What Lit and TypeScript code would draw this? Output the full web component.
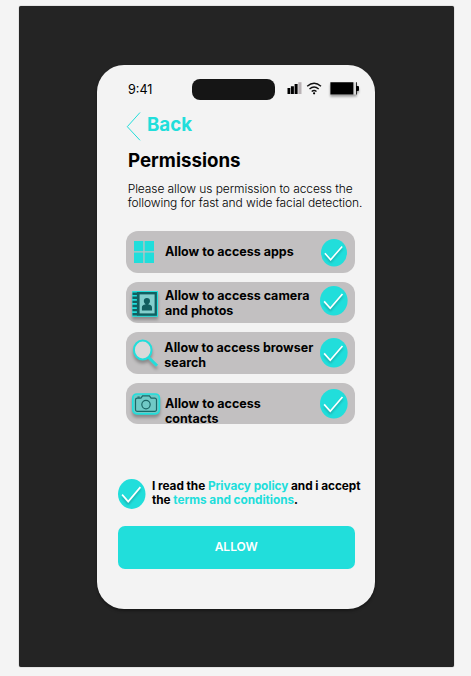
import { LitElement, html, css, svg } from "lit";
import { customElement, property } from "lit/decorators.js";

@customElement("check-mark")
class CheckMark extends LitElement {
  static styles = css`
    :host { display: block; flex: none; }
    svg { display: block; width: 100%; height: 100%; overflow: visible; }
    .tick { fill: none; stroke: #fff; stroke-width: 1.7; filter: drop-shadow(0 2px 1px rgba(0, 0, 0, 0.25)); }
  `;
  render() {
    return html`<svg viewBox="0 0 28 30" preserveAspectRatio="none">
      <ellipse cx="14" cy="15" rx="14" ry="15" fill="#21dedb" />
      <path class="tick" d="M4.2 15.6 L10.4 22.6 L22.8 8.1" />
    </svg>`;
  }
}

const icons: Record<string, unknown> = {
  apps: svg`<g fill="#21dedb"><path d="M8 10h9.3v10.2H8z M18.6 10H28v10.2h-9.4z M8 21.6h9.3V32H8z M18.6 21.6H28V32h-9.4z"/></g>`,
  book: svg`<g class="shadow">
      <rect x="6.2" y="9" width="25.8" height="25.8" fill="#21dedb"/>
      <rect x="10.9" y="10" width="20" height="23.8" fill="#125f60"/>
      <rect x="13.6" y="12.4" width="15" height="19" fill="#83cfcd"/>
      <path d="M6.5 11.7h5 M6.5 15.8h5 M6.5 19.9h5 M6.5 24h5 M6.5 28.1h5 M6.5 32.2h5" stroke="#125f60" stroke-width="2.4"/>
      <circle cx="20.9" cy="19.1" r="3.1" fill="#125f60"/>
      <path d="M19.4 20h3v2.6c2.5.3 3.6 1.3 3.6 3v2.9H15.9v-2.9c0-1.7 1.1-2.7 3.5-3z" fill="#125f60"/>
    </g>`,
  search: svg`<g class="shadow" fill="none" stroke="#21dedb">
      <ellipse cx="16.7" cy="18" rx="8.8" ry="9.5" fill="#d9d9d9" stroke-width="2"/>
      <path d="M22.2 25 L31 33.7" stroke-width="3"/>
    </g>`,
  camera: svg`<g class="shadow">
      <rect x="6.8" y="11" width="26.6" height="19.8" rx="4" fill="#70c9c6" stroke="#21dedb" stroke-width="1.7"/>
      <g fill="none" stroke="#1b6666" stroke-width="1.2">
        <path d="M11.3 15.1h3.6l1.7-2.3h6.8l1.7 2.3h3.6a1.8 1.8 0 0 1 1.8 1.8v9.7a1.8 1.8 0 0 1-1.8 1.8H11.3a1.8 1.8 0 0 1-1.8-1.8v-9.7a1.8 1.8 0 0 1 1.8-1.8z"/>
        <circle cx="20" cy="21.6" r="4.2"/><path d="M11.5 14.1h2.2"/>
      </g>
    </g>`,
};

@customElement("permission-row")
class PermissionRow extends LitElement {
  @property() icon = "";
  @property({ type: Array }) lines: string[] = [];
  static styles = css`
    :host { display: flex; box-sizing: border-box; width: 229px; background: #c2c0c1; border-radius: 12px; padding-right: 8px; }
    .icon { flex: none; width: 39px; height: 42px; overflow: visible; }
    .shadow { filter: drop-shadow(0 3px 1.5px rgba(0, 0, 0, 0.28)); }
    .label { flex: 1; font: 700 12.5px/15px Inter, sans-serif; color: #000; white-space: nowrap; padding-top: 6px; }
    check-mark { width: 27.6px; height: 29.6px; margin: 6px -0.4px 0 0; }
    :host([icon="apps"]) .label { padding-top: 13px; }
    :host([icon="apps"]) check-mark { width: 26px; height: 27.5px; margin: 7.6px 0.5px 0 0; }
    :host([icon="book"]) check-mark { margin-top: 4.5px; }
    :host([icon="search"]) .label { padding-top: 8px; margin-left: -0.7px; }
    :host([icon="camera"]) .label { padding-top: 13px; }
  `;
  render() {
    return html`<svg class="icon" viewBox="0 0 39 42">${icons[this.icon]}</svg>
      <div class="label">${this.lines.map((l) => html`<div>${l}</div>`)}</div>
      <check-mark></check-mark>`;
  }
}

@customElement("app-root")
class AppRoot extends LitElement {
  static styles = css`
    :host { display: block; box-sizing: border-box; width: 471px; height: 676px; padding: 6px 17px 9px 18.5px; background: #f4f4f4; font-family: Inter, sans-serif; color: #000; overflow: hidden; }
    .stage { box-sizing: border-box; height: 661px; padding: 59px 0 0 78.5px; background: #242424; border-radius: 2px; box-shadow: 0 0 1px #555; }
    .phone { box-sizing: border-box; width: 278px; height: 544px; background: #f3f3f3; border-radius: 27px; box-shadow: 0 2px 3px rgba(0, 0, 0, 0.35); padding-left: 29px; }
    .status { display: flex; height: 43px; padding-left: 2px; }
    .time { width: 63.5px; padding-top: 16px; font-size: 12.6px; line-height: 17px; }
    .island { width: 83.5px; height: 21.5px; margin-top: 13.5px; border-radius: 8px; background: #151515; }
    .signals { width: 90px; height: 43px; overflow: visible; }
    .battery { filter: drop-shadow(0 2px 1.2px rgba(0, 0, 0, 0.35)); }
    .back { display: flex; height: 34px; color: #21dedb; }
    .back svg { width: 21px; height: 34px; }
    .back span { font-size: 18.7px; font-weight: 700; line-height: 24px; padding-top: 5px; }
    h1 { margin: 7px 0 0 2px; font-size: 18.7px; font-weight: 700; line-height: 24px; }
    .intro { margin: 8.5px 0 0 1.7px; font-size: 12px; letter-spacing: -0.085px; line-height: 14px; font-weight: 300; color: #000; white-space: nowrap; }
    .rows { display: grid; grid-template-rows: 42px 41.5px 42px 41.5px; row-gap: 8.7px; margin-top: 21.5px; }
    .consent { display: flex; margin: 54.6px 0 0 -8px; }
    .consent check-mark { width: 27.5px; height: 30px; }
    .terms { font-size: 11.8px; letter-spacing: -0.045px; line-height: 14px; font-weight: 700; white-space: nowrap; padding: 0 0 0 6.5px; }
    .terms a { color: #21dedb; }
    .allow { display: block; width: 236.5px; height: 43px; margin: 17.4px 0 0 -8px; padding: 0 0 2px; border: 0; border-radius: 7px; background: #21dedb; color: #fff; font: 600 12px/41px Inter, sans-serif; }
  `;
  render() {
    return html`<div class="stage"><main class="phone">
      <div class="status">
        <div class="time">9:41</div>
        <div class="island"></div>
        <svg class="signals" viewBox="0 0 90 43">
          <path d="M12.5 23h2.8v6h-2.8z M15.9 21.2h3v7.8h-3z M19.6 19h3v10h-3z" fill="#000"/>
          <path d="M23.3 17.2h3.2V29h-3.2z" fill="#b9b2b5"/>
          <g fill="none" stroke="#111" stroke-width="1.4">
            <path d="M32.2 21.3q6.9-6 13.8 0 M34.5 24q4.6-4 9.2 0 M36.7 26.5q2.4-2 4.8 0"/>
          </g><circle cx="39.1" cy="28.3" r="1.1"/>
          <g class="battery"><rect x="55.4" y="17.5" width="26" height="12" fill="#d8d8d8"/><path d="M55.4 17.3h23v12.2h-23z M81 17.3h.8v12.2H81z M81.8 21h1.2q1 0 1 1v3q0 1-1 1h-1.2z"/></g>
        </svg>
      </div>
      <div class="back"><svg viewBox="0 0 21 34"><path d="M14 4.5 L1.3 18.7 L14 32.3" fill="none" stroke="#21dedb" stroke-width="1"/></svg><span>Back</span></div>
      <h1>Permissions</h1>
      <p class="intro">Please allow us permission to access the<br>following for fast and wide facial detection.</p>
      <div class="rows">
        <permission-row icon="apps" .lines=${["Allow to access apps"]}></permission-row>
        <permission-row icon="book" .lines=${["Allow to access camera", "and photos"]}></permission-row>
        <permission-row icon="search" .lines=${["Allow to access browser", "search"]}></permission-row>
        <permission-row icon="camera" .lines=${["Allow to access", "contacts"]}></permission-row>
      </div>
      <div class="consent"><check-mark></check-mark>
        <div class="terms">I read the <a>Privacy policy</a> and i accept<br>the <a>terms and conditions</a>.</div>
      </div>
      <button class="allow">ALLOW</button>
    </main></div>`;
  }
}
